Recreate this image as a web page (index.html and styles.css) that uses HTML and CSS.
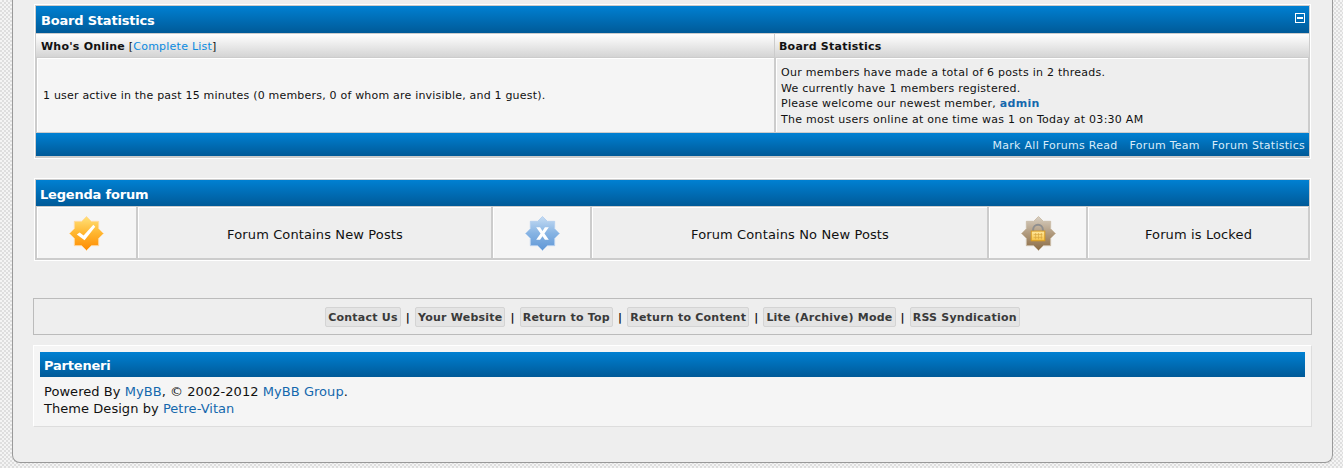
FILE: index.html
```html
<!DOCTYPE html>
<html lang="en">
<head>
    <meta charset="UTF-8">
    <title>Forum Index</title>
    <link rel="stylesheet" href="styles.css">
</head>
<body>
    <div class="wrapper">
        <div class="tborder stats">
            <div class="thead">
                <strong>Board Statistics</strong>
                <svg class="collapse" width="10" height="10" viewBox="0 0 10 10"><rect x="0.5" y="0.5" width="9" height="9" fill="none" stroke="#fff"/><rect x="2" y="4" width="6" height="2" fill="#fff"/></svg>
            </div>
            <div class="stats-grid">
                <div class="tcat"><strong>Who's Online</strong> [<a href="#">Complete List</a>]</div>
                <div class="tcat second"><strong>Board Statistics</strong></div>
                <div class="cell online">1 user active in the past 15 minutes (0 members, 0 of whom are invisible, and 1 guest).</div>
                <div class="cell totals">
                    <div>Our members have made a total of 6 posts in 2 threads.</div>
                    <div>We currently have 1 members registered.</div>
                    <div>Please welcome our newest member, <a href="#" class="member">admin</a></div>
                    <div>The most users online at one time was 1 on Today at 03:30 AM</div>
                </div>
            </div>
            <div class="tfoot">
                <a href="#">Mark All Forums Read</a>
                <a href="#">Forum Team</a>
                <a href="#">Forum Statistics</a>
            </div>
        </div>

        <div class="tborder legend">
            <div class="thead legend-head"><strong>Legenda forum</strong></div>
            <div class="legend-grid">
                <div class="icon-cell">
                    <svg width="35" height="35" viewBox="0 0 36 36">
                        <defs>
                            <linearGradient id="gold" x1="0" y1="0" x2="0" y2="1"><stop offset="0" stop-color="#ffe27a"/><stop offset="0.5" stop-color="#ffb52e"/><stop offset="1" stop-color="#ff8a00"/></linearGradient>
                        </defs>
                        <polygon points="18,0.5 23,5.5 30.5,5.5 30.5,13 35.5,18 30.5,23 30.5,30.5 23,30.5 18,35.5 13,30.5 5.5,30.5 5.5,23 0.5,18 5.5,13 5.5,5.5 13,5.5" fill="url(#gold)" stroke="#ffd9a0"/>
                        <path d="M8 19l3-2 4 3 10-11 2 2-11 14z" fill="#fff"/>
                    </svg>
                </div>
                <div class="label-cell">Forum Contains New Posts</div>
                <div class="icon-cell">
                    <svg width="35" height="35" viewBox="0 0 36 36">
                        <defs>
                            <linearGradient id="blue" x1="0" y1="0" x2="0" y2="1"><stop offset="0" stop-color="#c5dcf3"/><stop offset="0.5" stop-color="#86b3e3"/><stop offset="1" stop-color="#5f97d6"/></linearGradient>
                        </defs>
                        <polygon points="18,0.5 23,5.5 30.5,5.5 30.5,13 35.5,18 30.5,23 30.5,30.5 23,30.5 18,35.5 13,30.5 5.5,30.5 5.5,23 0.5,18 5.5,13 5.5,5.5 13,5.5" fill="url(#blue)" stroke="#b5d0ee"/>
                        <path d="M11.500 11.500h4l2.500 3.800 2.500-3.800h4l-4.500 6.500 4.500 6.500h-4l-2.500-3.800-2.500 3.800h-4l4.500-6.500z" fill="#fff"/>
                    </svg>
                </div>
                <div class="label-cell">Forum Contains No New Posts</div>
                <div class="icon-cell">
                    <svg width="35" height="35" viewBox="0 0 36 36">
                        <defs>
                            <linearGradient id="brown" x1="0" y1="0" x2="0" y2="1"><stop offset="0" stop-color="#d8cfc2"/><stop offset="0.5" stop-color="#b09a7e"/><stop offset="1" stop-color="#8a6a42"/></linearGradient>
                            <linearGradient id="lock" x1="0" y1="0" x2="0" y2="1"><stop offset="0" stop-color="#ffe9a0"/><stop offset="1" stop-color="#f7c244"/></linearGradient>
                        </defs>
                        <polygon points="18,0.5 23,5.5 30.5,5.5 30.5,13 35.500,18 30.5,23 30.5,30.5 23,30.5 18,35.5 13,30.500 5.5,30.5 5.5,23 0.5,18 5.5,13 5.5,5.5 13,5.5" fill="url(#brown)" stroke="#cbbda8"/>
                        <path d="M12.500 16v-2a5 5 0 0 1 10 0v2" fill="none" stroke="#8f8f8f" stroke-width="2"/>
                        <rect x="10.500" y="15.500" width="14" height="10" fill="url(#lock)" stroke="#d99a1c"/>
                        <path d="M13 19h9M13 22h9M15 17.500v6.500M18 17.500v6.500M21 17.500v6.500" stroke="#d9a640" stroke-width="0.7"/>
                    </svg>
                </div>
                <div class="label-cell">Forum is Locked</div>
            </div>
        </div>

        <div class="footer-links">
            <a href="#">Contact Us</a><span>|</span>
            <a href="#">Your Website</a><span>|</span>
            <a href="#">Return to Top</a><span>|</span>
            <a href="#">Return to Content</a><span>|</span>
            <a href="#">Lite (Archive) Mode</a><span>|</span>
            <a href="#">RSS Syndication</a>
        </div>

        <div class="partners">
            <div class="thead partners-head"><strong>Parteneri</strong></div>
            <div class="credits">
                Powered By <a href="#">MyBB</a>, &copy; 2002-2012 <a href="#">MyBB Group</a>.<br>
                Theme Design by <a href="#">Petre-Vitan</a>
            </div>
        </div>
    </div>
</body>
</html>
```

FILE: styles.css
```css
html, body {
    height: 468px;
    overflow: hidden;
}
body {
    margin: 0;
    font-family: "DejaVu Sans", sans-serif;
    font-size: 11px;
    letter-spacing: 0.23px;
    color: #111;
    background-color: #fff;
    background-image: conic-gradient(#dedede 25%, #f4f4f4 0 50%, #dedede 0 75%, #f4f4f4 0);
    background-size: 4px 4px;
}
a {
    text-decoration: none;
    color: #0072bc;
}
.wrapper {
    box-sizing: border-box;
    width: 1321px;
    height: 463px;
    margin-left: 12px;
    padding: 4px 20px 0 21px;
    background: #eeeeee;
    border: 1px solid #999;
    border-top: none;
    border-radius: 0 0 8px 8px;
}

.tborder {
    background: #ccc;
    border: 1px solid #fff;
    padding: 1px 1px 2px;
    width: 1277px;
    margin-bottom: 19px;
    box-sizing: border-box;
}
.thead {
    box-sizing: border-box;
    display: flex;
    justify-content: space-between;
    align-items: center;
    color: #fff;
    font-size: 13px;
    letter-spacing: -0.2px;
    height: 27px;
    padding: 2px 4px 0 5px;
    background: linear-gradient(#0080d2, #005a98);
}
.collapse {
    margin-top: -5px;
}

.stats-grid {
    display: grid;
    grid-template-columns: 738px 1fr;
    margin-top: 1px;
    column-gap: 1px;
}
.tcat {
    height: 23px;
    line-height: 25px;
    padding-left: 5px;
    background: linear-gradient(#ffffff, #d4d4d4);
}
.tcat.second {
    padding-left: 4px;
}
.tcat a {
    color: #0a8ae0;
}
.cell {
    margin-top: 1px;
    height: 74px;
    border: 1px solid #fff;
    border-width: 1px 0 0 1px;
    box-sizing: border-box;
}
.online {
    display: flex;
    align-items: center;
    margin-left: 1px;
    padding-left: 5px;
    letter-spacing: 0.2px;
    background: #f5f5f5;
}
.totals {
    margin: 1px 1px 0 1px;
    padding: 6px 0 0 4px;
    line-height: 15.5px;
    letter-spacing: 0.26px;
    background: #eeeeee;
}
.member {
    font-weight: bold;
    color: #1468ad;
}
.tfoot {
    display: flex;
    justify-content: flex-end;
    align-items: center;
    gap: 12px;
    box-sizing: border-box;
    height: 23px;
    padding: 2px 4px 0 0;
    margin-top: 1px;
    letter-spacing: 0.28px;
    background: linear-gradient(#0080d2, #005a98);
}
.tfoot a {
    color: #d8ecfa;
}

.legend-head {
    height: 26px;
    padding-left: 4px;
}
.legend-grid {
    display: grid;
    grid-template-columns: 99px 353px 97px 395px 97px 1fr;
    column-gap: 2px;
    margin: 1px 1px 0;
}
.icon-cell, .label-cell {
    display: flex;
    justify-content: center;
    align-items: center;
    height: 51px;
    box-sizing: border-box;
    border: 1px solid #fff;
    border-width: 1px 0 0 1px;
}
.icon-cell {
    background: #f5f5f5;
}
.icon-cell:first-child {
    padding-right: 2px;
}
.label-cell {
    padding-top: 2px;
    background: #eeeeee;
    font-size: 13px;
    letter-spacing: 0.12px;
}

.footer-links {
    box-sizing: border-box;
    width: 1279px;
    height: 37px;
    margin: 37px 0 10px -1px;
    padding-top: 1px;
    display: flex;
    justify-content: center;
    align-items: center;
    gap: 5px;
    background: #eeeeee;
    border: 1px solid #bbb;
    font-weight: bold;
}
.footer-links a {
    color: #3a3a3a;
    background: #e4e4e4;
    border: 1px solid #d4d4d4;
    border-radius: 2px;
    padding: 3px 2px 2px;
}
.footer-links span {
    color: #111;
}

.partners {
    box-sizing: border-box;
    width: 1279px;
    height: 82px;
    margin-left: -1px;
    padding: 6px;
    background: #f5f5f5;
    border: 1px solid;
    border-color: #fff #ddd #ddd #fff;
}
.partners-head {
    height: 25px;
    padding: 2px 4px 0;
}
.credits {
    font-size: 13px;
    letter-spacing: 0.05px;
    line-height: 17px;
    padding: 6px 4px;
}
.credits a {
    color: #1468ad;
}
```
